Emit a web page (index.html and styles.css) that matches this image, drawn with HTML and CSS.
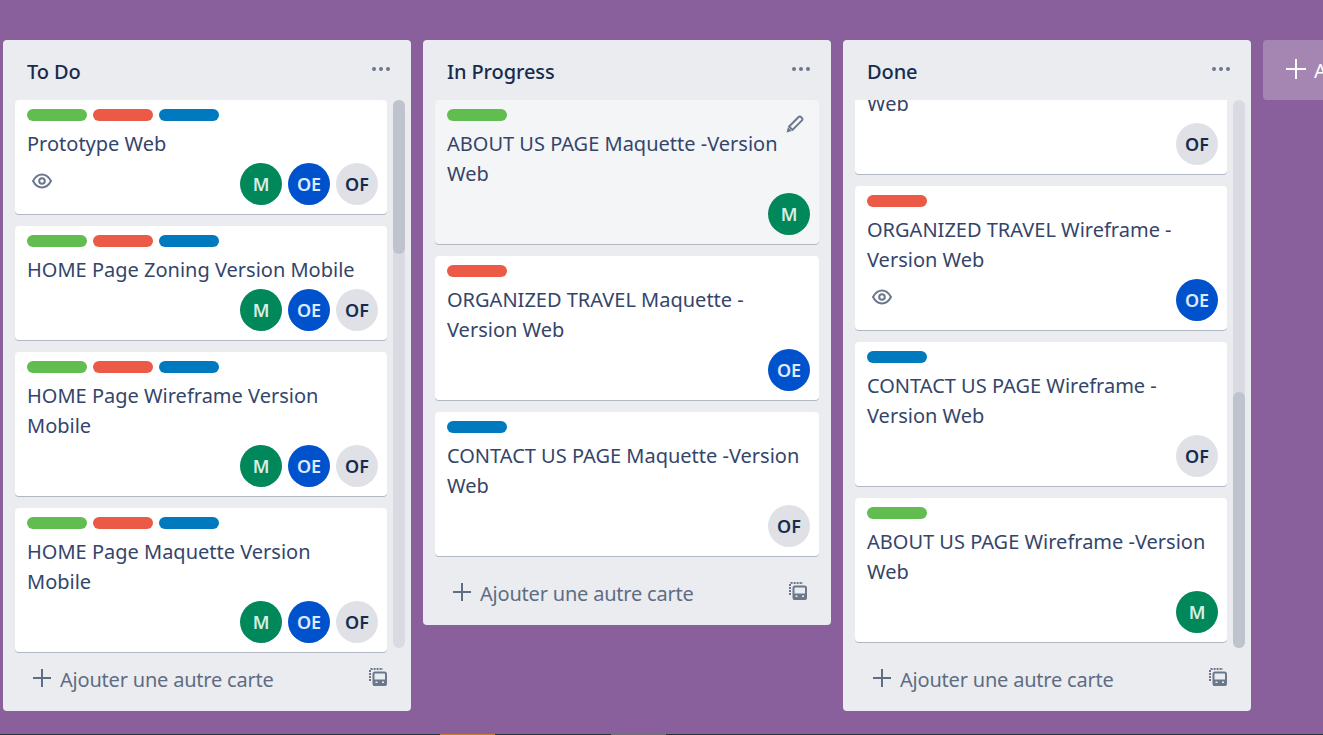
FILE: index.html
```html
<!DOCTYPE html>
<html lang="fr">
<head>
    <meta charset="UTF-8">
    <meta name="viewport" content="width=device-width, initial-scale=1.0">
    <title>Tableau</title>
    <link rel="stylesheet" href="styles.css">
</head>
<body>
    <svg class="sprites" width="0" height="0">
        <symbol id="eye" viewBox="0 0 20 16">
            <path d="M1 8c2.200-4 5.200-6.500 9-6.500s6.800 2.500 9 6.500c-2.200 4-5.200 6.500-9 6.500S3.200 12 1 8z" fill="none" stroke="currentColor" stroke-width="2"/>
            <circle cx="10" cy="8" r="2.800" fill="none" stroke="currentColor" stroke-width="2"/>
        </symbol>
        <symbol id="template" viewBox="0 0 18 18">
            <path d="M1 13V2a1 1 0 0 1 1-1h12" fill="none" stroke="currentColor" stroke-width="2" stroke-dasharray="2 1"/>
            <rect x="4.500" y="4.500" width="12.500" height="12.500" rx="1.500" fill="none" stroke="currentColor" stroke-width="2"/>
            <path d="M4 11.500h13.500V16a2 2 0 0 1-2 2H6a2 2 0 0 1-2-2z" fill="currentColor"/>
            <rect x="6.500" y="13.500" width="2" height="1.500" fill="#ebecf0"/>
            <rect x="13" y="13.500" width="2" height="1.500" fill="#ebecf0"/>
        </symbol>
    </svg>

    <div class="board">
        <section class="list">
            <header class="list-head">
                <h2>To Do</h2>
                <span class="dots"><i></i><i></i><i></i></span>
            </header>
            <div class="list-body">
                <div class="cards">
                    <article class="card">
                        <div class="labels"><span class="label green"></span><span class="label red"></span><span class="label blue"></span></div>
                        <p>Prototype Web</p>
                        <div class="meta">
                            <svg class="eye"><use href="#eye"/></svg>
                            <div class="members"><span class="avatar m">M</span><span class="avatar oe">OE</span><span class="avatar of">OF</span></div>
                        </div>
                    </article>
                    <article class="card">
                        <div class="labels"><span class="label green"></span><span class="label red"></span><span class="label blue"></span></div>
                        <p>HOME Page Zoning Version Mobile</p>
                        <div class="meta">
                            <div class="members"><span class="avatar m">M</span><span class="avatar oe">OE</span><span class="avatar of">OF</span></div>
                        </div>
                    </article>
                    <article class="card">
                        <div class="labels"><span class="label green"></span><span class="label red"></span><span class="label blue"></span></div>
                        <p>HOME Page Wireframe Version Mobile</p>
                        <div class="meta">
                            <div class="members"><span class="avatar m">M</span><span class="avatar oe">OE</span><span class="avatar of">OF</span></div>
                        </div>
                    </article>
                    <article class="card">
                        <div class="labels"><span class="label green"></span><span class="label red"></span><span class="label blue"></span></div>
                        <p>HOME Page Maquette Version Mobile</p>
                        <div class="meta">
                            <div class="members"><span class="avatar m">M</span><span class="avatar oe">OE</span><span class="avatar of">OF</span></div>
                        </div>
                    </article>
                </div>
                <div class="scrollbar"><div class="thumb thumb-top"></div></div>
            </div>
            <footer class="list-foot">
                <span class="add"><span class="plus"></span>Ajouter une autre carte</span>
                <svg class="template"><use href="#template"/></svg>
            </footer>
        </section>

        <section class="list list-short">
            <header class="list-head">
                <h2>In Progress</h2>
                <span class="dots"><i></i><i></i><i></i></span>
            </header>
            <div class="list-body">
                <div class="cards">
                    <article class="card card-hover">
                        <div class="labels"><span class="label green"></span></div>
                        <p>ABOUT US PAGE Maquette -Version Web</p>
                        <svg class="pencil" viewBox="0 0 18 18"><path d="M12.600 2a1.600 1.600 0 0 1 2.300 0l1.100 1.100a1.600 1.600 0 0 1 0 2.300l-9.500 9.500-3.400-3.400z" fill="none" stroke="currentColor" stroke-width="2"/><path d="M0.600 17.400l1.300-5.200 3.900 3.900z" fill="currentColor"/></svg>
                        <div class="meta">
                            <div class="members"><span class="avatar m">M</span></div>
                        </div>
                    </article>
                    <article class="card">
                        <div class="labels"><span class="label red"></span></div>
                        <p>ORGANIZED TRAVEL Maquette - Version Web</p>
                        <div class="meta">
                            <div class="members"><span class="avatar oe">OE</span></div>
                        </div>
                    </article>
                    <article class="card">
                        <div class="labels"><span class="label blue"></span></div>
                        <p>CONTACT US PAGE Maquette -Version Web</p>
                        <div class="meta">
                            <div class="members"><span class="avatar of">OF</span></div>
                        </div>
                    </article>
                </div>
            </div>
            <footer class="list-foot">
                <span class="add"><span class="plus"></span>Ajouter une autre carte</span>
                <svg class="template"><use href="#template"/></svg>
            </footer>
        </section>

        <section class="list">
            <header class="list-head">
                <h2>Done</h2>
                <span class="dots"><i></i><i></i><i></i></span>
            </header>
            <div class="list-body">
                <div class="cards">
                    <article class="card card-cut">
                        <p>Web</p>
                        <div class="meta">
                            <div class="members"><span class="avatar of">OF</span></div>
                        </div>
                    </article>
                    <article class="card">
                        <div class="labels"><span class="label red"></span></div>
                        <p>ORGANIZED TRAVEL Wireframe - Version Web</p>
                        <div class="meta">
                            <svg class="eye"><use href="#eye"/></svg>
                            <div class="members"><span class="avatar oe">OE</span></div>
                        </div>
                    </article>
                    <article class="card">
                        <div class="labels"><span class="label blue"></span></div>
                        <p>CONTACT US PAGE Wireframe - Version Web</p>
                        <div class="meta">
                            <div class="members"><span class="avatar of">OF</span></div>
                        </div>
                    </article>
                    <article class="card">
                        <div class="labels"><span class="label green"></span></div>
                        <p>ABOUT US PAGE Wireframe -Version Web</p>
                        <div class="meta">
                            <div class="members"><span class="avatar m">M</span></div>
                        </div>
                    </article>
                </div>
                <div class="scrollbar"><div class="thumb thumb-bottom"></div></div>
            </div>
            <footer class="list-foot">
                <span class="add"><span class="plus"></span>Ajouter une autre carte</span>
                <svg class="template"><use href="#template"/></svg>
            </footer>
        </section>

        <div class="add-list"><span class="plus"></span>Ajouter une autre liste</div>
    </div>

    <div class="taskbar"><span class="task task-orange"></span><span class="task task-grey"></span></div>
</body>
</html>
```

FILE: styles.css
```css
* {
    box-sizing: border-box;
}
html, body {
    height: 100%;
}
body {
    margin: 0;
    overflow: hidden;
    display: flex;
    flex-direction: column;
    background-color: #89609c;
    font-family: "Noto Sans", "Open Sans", sans-serif;
    color: #2c3c5c;
}
.sprites {
    display: block;
    height: 0;
}
.board {
    flex: 1;
    min-height: 0;
    display: flex;
    align-items: flex-start;
    gap: 12px;
    padding: 40px 0 23px 3px;
    overflow: hidden;
}

/* lists */
.list {
    flex: none;
    width: 408px;
    height: 100%;
    display: flex;
    flex-direction: column;
    background-color: #ebecf0;
    border-radius: 4px;
}
.list-short {
    height: auto;
}
.list-head {
    flex: none;
    height: 60px;
    display: flex;
    justify-content: space-between;
    padding: 15px 21px 0 24px;
}
.list-head h2 {
    margin: 0;
    font-size: 20px;
    line-height: 33px;
    font-weight: 500;
    letter-spacing: -.1px;
    color: #172b4d;
}
.dots {
    display: flex;
    gap: 3px;
    padding-top: 12px;
}
.dots i {
    width: 4px;
    height: 4px;
    border-radius: 50%;
    background-color: #6b778c;
}
.list-body {
    flex: 1;
    min-height: 0;
    display: flex;
    gap: 6px;
    padding: 0 6px 0 12px;
    overflow: hidden;
}
.list-short .list-body {
    padding: 0 12px 10px;
}
.cards {
    flex: 1;
    min-width: 0;
    display: flex;
    flex-direction: column;
    gap: 12px;
    overflow: hidden;
    padding-bottom: 2px;
}

/* cards */
.card {
    flex: none;
    position: relative;
    padding: 9px 9px 9px 12px;
    background-color: #fff;
    border-radius: 4px;
    box-shadow: 0 1px 0 rgba(9, 30, 66, .25);
}
.card-hover {
    background-color: #f4f5f7;
}
.card-cut {
    margin-top: -11px;
    padding-top: 0;
    border-radius: 0 0 4px 4px;
}
.labels {
    display: flex;
    gap: 6px;
    margin-bottom: 8px;
}
.label {
    width: 60px;
    height: 12px;
    border-radius: 6px;
}
.green { background-color: #61bd4f; }
.red { background-color: #eb5a46; }
.blue { background-color: #0079bf; }
.card p {
    margin: 0 0 4px;
    font-size: 20px;
    line-height: 30px;
    color: #34456a;
}
.meta {
    display: flex;
    justify-content: space-between;
    align-items: flex-start;
}
.members {
    display: flex;
    gap: 6px;
    margin-left: auto;
}
.avatar {
    width: 42px;
    height: 42px;
    display: flex;
    align-items: center;
    justify-content: center;
    border-radius: 50%;
    font-size: 18px;
    font-weight: 600;
}
.avatar.m { background-color: #00875a; color: #d8efe6; }
.avatar.oe { background-color: #0052cc; color: #deebff; }
.avatar.of { background-color: #dfe1e6; color: #172b4d; }
.eye {
    width: 20px;
    height: 16px;
    margin: 10px 0 0 5px;
    color: #6b778c;
}
.pencil {
    position: absolute;
    top: 15px;
    right: 15px;
    width: 18px;
    height: 18px;
    color: #6b778c;
}

/* scrollbar */
.scrollbar {
    flex: none;
    width: 12px;
    margin-bottom: 6px;
    background-color: #dadbe2;
    border-radius: 6px;
    position: relative;
}
.thumb {
    position: absolute;
    left: 0;
    right: 0;
    background-color: #bfc3ce;
    border-radius: 6px;
}
.thumb-top {
    top: 0;
    height: 154px;
}
.thumb-bottom {
    bottom: 0;
    height: 256px;
}

/* footer */
.list-foot {
    flex: none;
    height: 57px;
    display: flex;
    justify-content: space-between;
    padding: 8px 24px 0 30px;
}
.add {
    display: flex;
    align-items: center;
    height: 34px;
    font-size: 20px;
    letter-spacing: -.2px;
    color: #5e6c84;
}
.plus {
    flex: none;
    position: relative;
    width: 18px;
    height: 18px;
    margin-right: 9px;
    margin-top: -2px;
}
.plus::before, .plus::after {
    content: "";
    position: absolute;
    background-color: currentColor;
}
.plus::before {
    left: 0;
    right: 0;
    top: 8px;
    height: 2px;
}
.plus::after {
    top: 0;
    bottom: 0;
    left: 8px;
    width: 2px;
}
.template {
    width: 18px;
    height: 18px;
    margin-top: 6px;
    color: #6b778c;
}
.add-list {
    flex: none;
    width: 408px;
    height: 60px;
    display: flex;
    align-items: center;
    padding-left: 23px;
    background-color: rgba(255, 255, 255, .24);
    border-radius: 4px;
    color: #fff;
    font-size: 20px;
}
.add-list .plus {
    width: 20px;
    height: 20px;
    margin-right: 8px;
}
.add-list .plus::before {
    top: 9px;
}
.add-list .plus::after {
    left: 9px;
}

/* strip at the very bottom of the window */
.taskbar {
    flex: none;
    height: 1px;
    display: flex;
    padding-left: 440px;
    gap: 116px;
    background-color: #22343f;
}
.task {
    width: 55px;
}
.task-orange { background-color: #c8802c; }
.task-grey { background-color: #6b7276; }
```
